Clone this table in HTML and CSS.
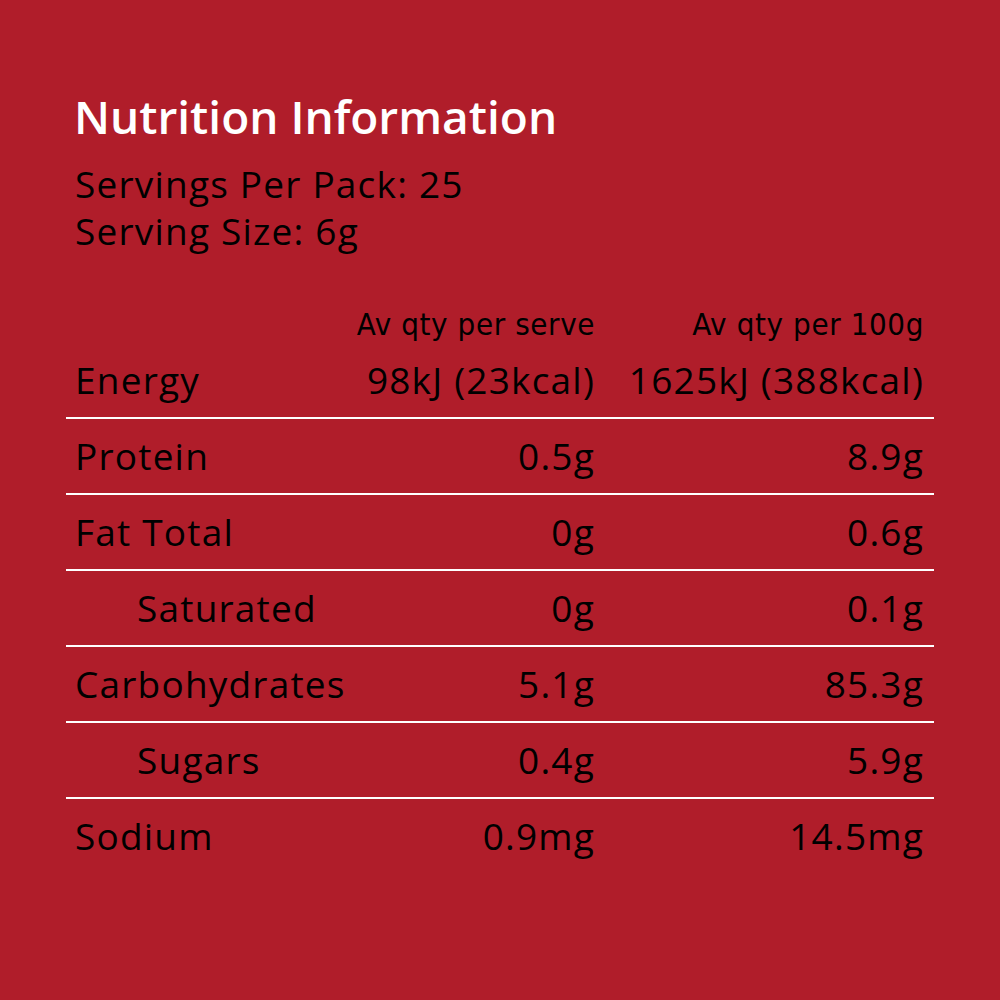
FILE: index.html
```html
<!DOCTYPE html>
<html lang="en">
<head>
<meta charset="utf-8">
<title>Nutrition Information</title>
<link rel="stylesheet" href="styles.css">
</head>
<body>
<main class="panel">
  <h1 class="title">Nutrition Information</h1>
  <p class="meta">Servings Per Pack: 25<br>Serving Size: 6g</p>
  <div class="table">
    <div class="row head">
      <span class="label"></span>
      <span class="c2">Av qty per serve</span>
      <span class="c3">Av qty per 100g</span>
    </div>
    <div class="row line">
      <span class="label">Energy</span>
      <span class="c2">98kJ (23kcal)</span>
      <span class="c3">1625kJ (388kcal)</span>
    </div>
    <div class="row line">
      <span class="label">Protein</span>
      <span class="c2">0.5g</span>
      <span class="c3">8.9g</span>
    </div>
    <div class="row line">
      <span class="label">Fat Total</span>
      <span class="c2">0g</span>
      <span class="c3">0.6g</span>
    </div>
    <div class="row line">
      <span class="label sub">Saturated</span>
      <span class="c2">0g</span>
      <span class="c3">0.1g</span>
    </div>
    <div class="row line">
      <span class="label">Carbohydrates</span>
      <span class="c2">5.1g</span>
      <span class="c3">85.3g</span>
    </div>
    <div class="row line">
      <span class="label sub">Sugars</span>
      <span class="c2">0.4g</span>
      <span class="c3">5.9g</span>
    </div>
    <div class="row">
      <span class="label">Sodium</span>
      <span class="c2">0.9mg</span>
      <span class="c3">14.5mg</span>
    </div>
  </div>
</main>
</body>
</html>
```
FILE: styles.css
```css
html, body {
  margin: 0;
  padding: 0;
  background: #b01d2a;
}
body {
  font-family: "Open Sans", Lato, sans-serif;
  color: #000;
  width: 1000px;
  height: 1000px;
}
.panel {
  padding: 88px 66px 0 66px;
}
.title {
  margin: 0 0 16px 0;
  padding-left: 8px;
  font-size: 46px;
  line-height: 56px;
  font-weight: 600;
  color: #fff;
}
.meta {
  margin: 0 0 51px 0;
  padding-left: 9px;
  font-size: 37px;
  line-height: 47px;
  letter-spacing: 1.2px;
}
.table {
  display: flex;
  flex-direction: column;
}
.row {
  display: flex;
  align-items: center;
  height: 74px;
  line-height: 72px;
  padding: 0 10px 0 9px;
  font-size: 37px;
  letter-spacing: 1.2px;
}
.row.line {
  border-bottom: 2px solid #fff;
}
.row.head {
  height: 38px;
  line-height: 38px;
  font-size: 31px;
  letter-spacing: 0.6px;
  font-family: "DejaVu Sans Condensed", "Liberation Sans", sans-serif;
  font-stretch: condensed;
}
.label {
  flex: 1;
}
.label.sub {
  padding-left: 62px;
}
.c2 {
  width: 240px;
  text-align: right;
}
.c3 {
  width: 329px;
  text-align: right;
}
```
